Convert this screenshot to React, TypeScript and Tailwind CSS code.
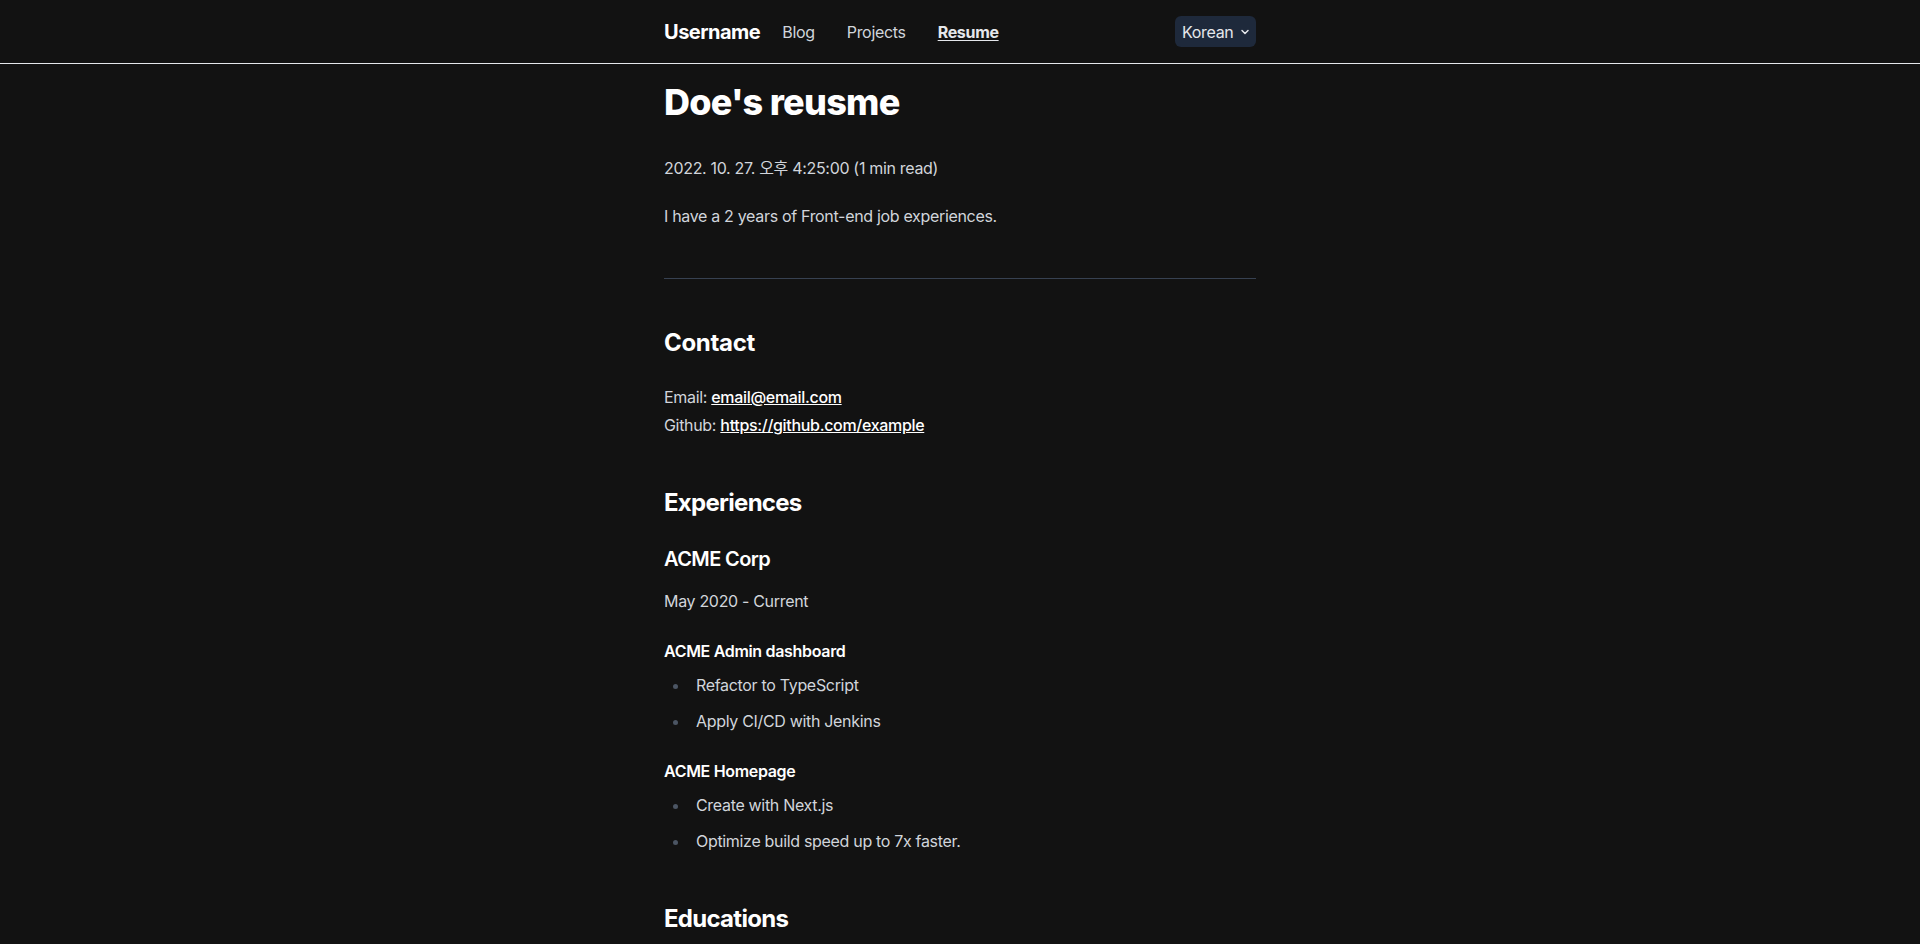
import { ChevronDown } from "lucide-react";

const experiences = [
  {
    company: "ACME Corp",
    period: "May 2020 - Current",
    projects: [
      { name: "ACME Admin dashboard", tasks: ["Refactor to TypeScript", "Apply CI/CD with Jenkins"] },
      { name: "ACME Homepage", tasks: ["Create with Next.js", "Optimize build speed up to 7x faster."] },
    ],
  },
];

function Header() {
  return (
    <header className="h-16 border-b border-[#e5e7eb]">
      <div className="mx-auto flex h-full w-[592px] items-center justify-between">
        <nav className="flex items-center">
          <a className="text-xl font-bold tracking-[-0.025em] text-white">Username</a>
          <div className="ml-[22px] flex items-center gap-8 text-base text-[#d1d5db]">
            <a>Blog</a>
            <a>Projects</a>
            <a className="font-bold text-[#e5e7eb] underline underline-offset-2">Resume</a>
          </div>
        </nav>
        <div className="flex h-[31px] w-[81px] items-center justify-between rounded-md bg-[#1e293b] pr-[5px] pl-[7px] text-base text-[#e5e7eb]">
          <span>Korean</span>
          <ChevronDown size={12} strokeWidth={3} />
        </div>
      </div>
    </header>
  );
}

export default function App() {
  return (
    <div
      className="min-h-screen bg-[#121212] text-base leading-7 tracking-[-0.02em] text-[#d1d5db]"
      style={{ fontFamily: 'Inter, "Noto Sans CJK KR", sans-serif' }}
    >
      <Header />
      <main className="mx-auto w-[592px] pt-[18px] pb-16">
        <h1 className="mb-8 text-4xl leading-10 font-extrabold tracking-[-0.02em] text-white">Doe's reusme</h1>
        <p className="mb-5">2022. 10. 27. 오후 4:25:00 (1 min read)</p>
        <p className="mb-5">I have a 2 years of Front-end job experiences.</p>
        <hr className="my-12 border-[#374151]" />

        <h2 className="mb-6 text-2xl leading-8 font-bold text-white">Contact</h2>
        <p>
          Email: <a className="font-medium text-white underline">email@email.com</a>
          <br />
          Github: <a className="font-medium text-white underline">https://github.com/example</a>
        </p>

        <h2 className="mt-12 mb-6 text-2xl leading-8 font-bold tracking-[-0.03em] text-white">Experiences</h2>
        {experiences.map((exp) => (
          <div key={exp.company}>
            <h3 className="mb-3 text-xl leading-8 font-semibold tracking-[-0.03em] text-white">{exp.company}</h3>
            <p className="mb-5">{exp.period}</p>
            {exp.projects.map((proj) => (
              <div key={proj.name} className="mt-6">
                <h4 className="mb-2 text-base leading-6 font-semibold text-white">{proj.name}</h4>
                <ul className="list-disc pl-[26px] marker:text-[#4b5563]">
                  {proj.tasks.map((task) => (
                    <li key={task} className="my-2 pl-1.5">
                      {task}
                    </li>
                  ))}
                </ul>
              </div>
            ))}
          </div>
        ))}

        <h2 className="mt-12 mb-6 text-2xl leading-8 font-bold tracking-[-0.03em] text-white">Educations</h2>
        <h3 className="mb-3 text-xl leading-8 font-semibold tracking-[-0.03em] text-white">ACME University</h3>
        <p className="mb-5">Mar 2014 - Feb 2020</p>
      </main>
    </div>
  );
}
